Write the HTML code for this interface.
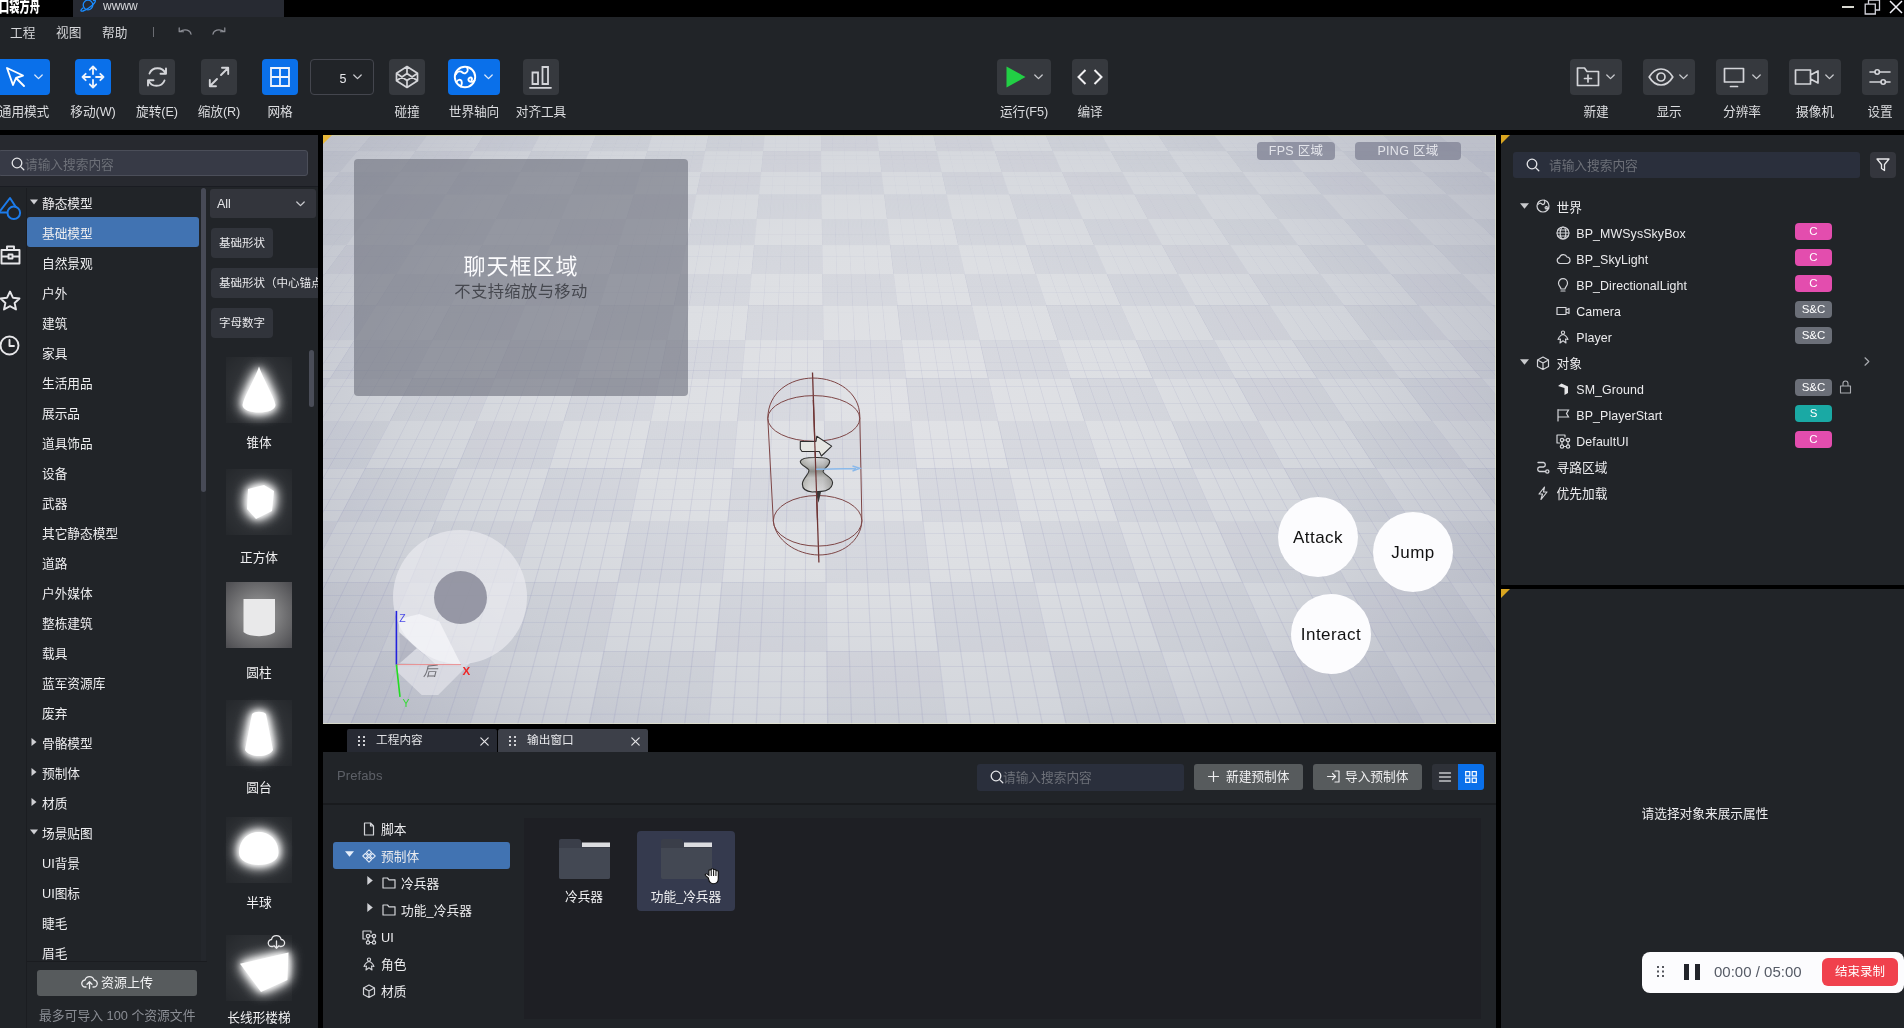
<!DOCTYPE html>
<html lang="zh-CN">
<head>
<meta charset="utf-8">
<title>wwww</title>
<style>
*{box-sizing:border-box;margin:0;padding:0}
html,body{width:1904px;height:1028px;overflow:hidden;background:#000}
body{position:relative;font-family:"Liberation Sans","Noto Sans CJK SC",sans-serif;font-size:13px;color:#e6e7ea;-webkit-font-smoothing:antialiased}
.abs{position:absolute}
.panel{position:absolute;background:#212428}
#wrap{position:absolute;left:0;top:0;width:1904px;height:1028px;overflow:hidden;will-change:transform}
svg{display:block;overflow:visible}
.ic{fill:none;stroke:#d4d5d9;stroke-width:1.6;stroke-linecap:round;stroke-linejoin:round}
/* title bar */
#titlebar{left:0;top:0;width:1904px;height:17px;background:#000}
#logo{left:-1px;top:-6.500px;font-weight:900;font-size:14px;letter-spacing:0;transform-origin:0 0;transform:scale(.73,1.12);color:#fff;line-height:22px;white-space:nowrap;font-family:"Liberation Sans","Noto Sans CJK SC",sans-serif}
#tab{left:73px;top:0;width:211px;height:17px;background:#272a32}
#tab span{position:absolute;left:30px;top:-2.500px;font-size:12px;color:#d8d9dc;line-height:17px}
/* toolbar */
#toolbar{left:0;top:17px;width:1904px;height:113px}
.menu{position:absolute;top:8px;font-size:12.700px;line-height:16px;color:#d6d7da}
.tb{position:absolute;top:42px;height:36px;border-radius:4px;background:#36393e}
.tb.on{background:#0a70ea}
.tl{position:absolute;top:87px;font-size:12.700px;letter-spacing:-.1px;line-height:16px;color:#dcdde0;white-space:nowrap;transform:translateX(-50%)}

.ti{position:absolute;left:42px;font-size:12.700px;line-height:18px;color:#eeeef0;white-space:nowrap}
.tag{position:absolute;left:1px;height:30px;padding:0 8px;background:#31343b;border-radius:4px;font-size:11.500px;line-height:30px;color:#e9e9ec;white-space:nowrap}

.badge2{position:absolute;top:7px;height:18px;border-radius:4px;background:rgba(130,132,150,.78);color:#e3e4ea;font-size:12.500px;line-height:18px;text-align:center;letter-spacing:.3px}
.act{position:absolute;width:80px;height:80px;border-radius:50%;background:#fcfcfe;color:#111;font-size:17px;line-height:82px;text-align:center;letter-spacing:.45px}

.rt{position:absolute;line-height:16px;color:#ececee;white-space:nowrap;letter-spacing:.1px}
.bdg{position:absolute;width:37px;height:17px;border-radius:4px;color:#fff;font-size:11.500px;line-height:16px;text-align:center;top:0}
</style>
</head>
<body>
<div id="wrap">
<!-- TITLE BAR -->
<div id="titlebar" class="abs">
  <div id="tab" class="abs"><span>wwww</span></div>
  <div id="logo" class="abs">口袋方舟</div>
  <svg class="abs" style="left:79px;top:-3px" width="18" height="16" viewBox="0 0 18 16"><g fill="none" stroke="#1a8cff" stroke-width="1.300"><circle cx="9" cy="8" r="4.800"/><path d="M4.300 10.800 C1 13.200 1.200 14.600 4 14 C7 13.200 12.500 9.500 15 6.500 C17 4 17 2.600 14 3.700"/></g></svg>
  <div class="abs" style="left:1842px;top:6px;width:12px;height:2px;background:#d8d8d0"></div>
  <svg class="abs" style="left:1864px;top:-1px" width="17" height="16" viewBox="0 0 17 16"><path fill="none" stroke="#d4d4dc" stroke-width="1.300" d="M1.200 5.200 H11.300 V15 H1.200 Z M4.500 5 V1 H15.500 V11 H11.500"/></svg>
  <svg class="abs" style="left:1889px;top:0" width="14" height="14" viewBox="0 0 14 14"><path fill="none" stroke="#f0f0f8" stroke-width="1.500" d="M1 1 L13 13 M13 1 L1 13"/></svg>
</div>
<!-- TOOLBAR -->
<div id="toolbar" class="panel">
  <div class="menu" style="left:10px">工程</div>
  <div class="menu" style="left:56px">视图</div>
  <div class="menu" style="left:102px">帮助</div>
  <div class="abs" style="left:153px;top:10px;width:1px;height:10px;background:#6a6c72"></div>
  <svg class="abs" style="left:177.500px;top:10px" width="14" height="8" viewBox="0 0 14 9" preserveAspectRatio="none"><path class="ic" style="stroke:#8a8c93;stroke-width:1.250" d="M13 8.200 C12.500 3.500 7 1.500 1.800 5 M1.200 1 V5.300 H5.500"/></svg>
  <svg class="abs" style="left:212px;top:10px" width="14" height="8" viewBox="0 0 14 9" preserveAspectRatio="none"><path class="ic" style="stroke:#8a8c93;stroke-width:1.250" d="M1 8.200 C1.500 3.500 7 1.500 12.200 5 M12.800 1 V5.300 H8.500"/></svg>

  <!-- 通用模式 -->
  <div class="tb on" style="left:-4px;width:54px"></div>
  <svg class="abs" style="left:5px;top:49px" width="22" height="22" viewBox="0 0 22 22"><path class="ic" style="stroke:#fff;stroke-width:1.9" d="M2 2 L8 19 L11 12 L18 9.5 Z M11.5 12.5 L19 20"/></svg>
  <svg class="abs" style="left:34px;top:57px" width="9" height="6" viewBox="0 0 9 6"><path class="ic" style="stroke:#dfe9f8;stroke-width:1.3" d="M0.8 1 L4.5 4.6 L8.2 1"/></svg>
  <div class="tl" style="left:24px">通用模式</div>
  <!-- 移动 -->
  <div class="tb on" style="left:75px;width:36px"></div>
  <svg class="abs" style="left:81px;top:48px" width="24" height="24" viewBox="0 0 24 24"><path class="ic" style="stroke:#eef3fb;stroke-width:1.8" d="M12 1.5 V9 M12 15 V22.5 M1.5 12 H9 M15 12 H22.5 M8.8 4.7 L12 1.5 L15.2 4.7 M8.8 19.3 L12 22.5 L15.2 19.3 M4.7 8.8 L1.5 12 L4.7 15.2 M19.3 8.8 L22.5 12 L19.3 15.2"/></svg>
  <div class="tl" style="left:93px">移动(W)</div>
  <!-- 旋转 -->
  <div class="tb" style="left:139px;width:36px"></div>
  <svg class="abs" style="left:145px;top:48px" width="24" height="24" viewBox="0 0 24 24"><path class="ic" style="stroke-width:1.9" d="M4.5 8.5 A8.5 8 0 0 1 20.5 8.5 M19.5 15.5 A8.5 8 0 0 1 3.5 15.5 M21 3.5 V8.8 H15.5 M3 20.5 V15.2 H8.5"/></svg>
  <div class="tl" style="left:157px">旋转(E)</div>
  <!-- 缩放 -->
  <div class="tb" style="left:201px;width:36px"></div>
  <svg class="abs" style="left:208px;top:49px" width="22" height="22" viewBox="0 0 22 22"><path class="ic" style="stroke-width:1.9" d="M13 9 L20 2 M14 1.8 H20.2 V8 M9 13 L2 20 M1.8 14 V20.2 H8"/></svg>
  <div class="tl" style="left:219px">缩放(R)</div>
  <!-- 网格 -->
  <div class="tb on" style="left:262px;width:36px"></div>
  <svg class="abs" style="left:270px;top:50px" width="20" height="20" viewBox="0 0 20 20"><path class="ic" style="stroke:#eef3fb;stroke-width:1.8;stroke-linejoin:miter" d="M1 1 H19 V19 H1 Z M10 1 V19 M1 10 H19"/></svg>
  <div class="tl" style="left:280px">网格</div>
  <!-- dropdown -->
  <div class="abs" style="left:310px;top:42px;width:64px;height:36px;border:1px solid #44464e;border-radius:4px"></div>
  <div class="abs" style="left:339.500px;top:53.500px;font-size:12.500px;line-height:16px;color:#e8e9ec">5</div>
  <svg class="abs" style="left:353px;top:57px" width="9" height="6" viewBox="0 0 9 6"><path class="ic" style="stroke:#c9cace;stroke-width:1.3" d="M0.8 1 L4.5 4.6 L8.2 1"/></svg>
  <!-- 碰撞 -->
  <div class="tb" style="left:389px;width:36px"></div>
  <svg class="abs" style="left:395px;top:48px" width="24" height="24" viewBox="0 0 24 24"><path class="ic" style="stroke-width:1.7" d="M12 1.5 L22.5 8.3 V15.7 L12 22.5 L1.5 15.7 V8.3 Z M12 1.5 V8.5 M12 15.5 V22.5 M1.5 8.3 L12 15.5 L22.5 8.3 M1.5 15.7 L12 8.5 L22.5 15.7"/></svg>
  <div class="tl" style="left:407px">碰撞</div>
  <!-- 世界轴向 -->
  <div class="tb on" style="left:448px;width:52px"></div>
  <svg class="abs" style="left:453px;top:48px" width="24" height="24" viewBox="0 0 24 24"><g class="ic" style="stroke:#fff;stroke-width:1.9"><circle cx="12" cy="12" r="10.2"/><path d="M3 9 C5 5.5 8 6 9.5 7.5 C11 9 13.5 8.5 14.5 6 C15 4.5 14.5 3 14 2.2 M3.5 17 C4.5 14.5 7.5 14 8.5 16 C9.5 18 8.5 20 8 21.5 M21.5 15.5 C20 16.5 17.5 17.5 16 16 C14.5 14.5 16 12.5 17.5 12.5 C19 12.5 19.5 14 18.5 15"/></g></svg>
  <svg class="abs" style="left:484px;top:57px" width="9" height="6" viewBox="0 0 9 6"><path class="ic" style="stroke:#dfe9f8;stroke-width:1.3" d="M0.8 1 L4.5 4.6 L8.2 1"/></svg>
  <div class="tl" style="left:474px">世界轴向</div>
  <!-- 对齐工具 -->
  <div class="tb" style="left:523px;width:36px"></div>
  <svg class="abs" style="left:529px;top:48px" width="24" height="24" viewBox="0 0 24 24"><path class="ic" style="stroke-width:1.8;stroke-linejoin:miter" d="M3.5 7.5 H9 V19 H3.5 Z M13.5 2 H19 V19 H13.5 Z M1 22.8 H22"/></svg>
  <div class="tl" style="left:541px">对齐工具</div>
  <!-- 运行 -->
  <div class="tb" style="left:997px;width:54px"></div>
  <svg class="abs" style="left:1006px;top:49px" width="20" height="22" viewBox="0 0 20 22"><path d="M0.5 0.5 L19.5 11 L0.5 21.5 Z" fill="#22cf45"/></svg>
  <svg class="abs" style="left:1034px;top:57px" width="9" height="6" viewBox="0 0 9 6"><path class="ic" style="stroke:#c9cace;stroke-width:1.3" d="M0.8 1 L4.5 4.6 L8.2 1"/></svg>
  <div class="tl" style="left:1024px">运行(F5)</div>
  <!-- 编译 -->
  <div class="tb" style="left:1072px;width:36px"></div>
  <svg class="abs" style="left:1077px;top:52px" width="26" height="16" viewBox="0 0 26 16"><path class="ic" style="stroke:#f0f0f2;stroke-width:2;stroke-linecap:butt;stroke-linejoin:miter" d="M8.5 1 L1.5 8 L8.5 15 M17.5 1 L24.5 8 L17.5 15"/></svg>
  <div class="tl" style="left:1090px">编译</div>
  <!-- 新建 -->
  <div class="tb" style="left:1570px;width:52px"></div>
  <svg class="abs" style="left:1576px;top:49px" width="24" height="22" viewBox="0 0 24 22"><path class="ic" style="stroke-width:1.7" d="M1.5 2 H8.5 L11 5.5 H22.5 V19.5 H1.5 Z M12 9 V16 M8.5 12.5 H15.5"/></svg>
  <svg class="abs" style="left:1606px;top:57px" width="9" height="6" viewBox="0 0 9 6"><path class="ic" style="stroke:#c9cace;stroke-width:1.3" d="M0.8 1 L4.5 4.6 L8.2 1"/></svg>
  <div class="tl" style="left:1596px">新建</div>
  <!-- 显示 -->
  <div class="tb" style="left:1643px;width:52px"></div>
  <svg class="abs" style="left:1648px;top:50px" width="26" height="20" viewBox="0 0 26 20"><g class="ic" style="stroke-width:1.7"><path d="M1.2 10 C5 3.5 9 2 13 2 C17 2 21 3.5 24.8 10 C21 16.500 17 18 13 18 C9 18 5 16.500 1.2 10 Z"/><circle cx="13" cy="10" r="4"/></g></svg>
  <svg class="abs" style="left:1679px;top:57px" width="9" height="6" viewBox="0 0 9 6"><path class="ic" style="stroke:#c9cace;stroke-width:1.3" d="M0.8 1 L4.5 4.6 L8.2 1"/></svg>
  <div class="tl" style="left:1669px">显示</div>
  <!-- 分辨率 -->
  <div class="tb" style="left:1716px;width:52px"></div>
  <svg class="abs" style="left:1723px;top:50px" width="22" height="21" viewBox="0 0 22 21"><path class="ic" style="stroke-width:1.7" d="M1.5 1.500 H20.5 V15 H1.5 Z M7.5 19.5 H14.5"/></svg>
  <svg class="abs" style="left:1752px;top:57px" width="9" height="6" viewBox="0 0 9 6"><path class="ic" style="stroke:#c9cace;stroke-width:1.3" d="M0.8 1 L4.5 4.6 L8.2 1"/></svg>
  <div class="tl" style="left:1742px">分辨率</div>
  <!-- 摄像机 -->
  <div class="tb" style="left:1789px;width:52px"></div>
  <svg class="abs" style="left:1794px;top:51px" width="26" height="18" viewBox="0 0 26 18"><path class="ic" style="stroke-width:1.7" d="M1.5 2 H16.5 V16 H1.5 Z M16.5 7 L24 3 V15 L16.5 11"/></svg>
  <svg class="abs" style="left:1825px;top:57px" width="9" height="6" viewBox="0 0 9 6"><path class="ic" style="stroke:#c9cace;stroke-width:1.3" d="M0.8 1 L4.5 4.6 L8.2 1"/></svg>
  <div class="tl" style="left:1815px">摄像机</div>
  <!-- 设置 -->
  <div class="tb" style="left:1862px;width:36px"></div>
  <svg class="abs" style="left:1869px;top:51px" width="22" height="18" viewBox="0 0 22 18"><g class="ic" style="stroke-width:1.6"><path d="M1 4 H6 M10.5 4 H21 M1 14 H12 M16.5 14 H21"/><circle cx="8.2" cy="4" r="2.200"/><circle cx="14.2" cy="14" r="2.200"/></g></svg>
  <div class="tl" style="left:1880px">设置</div>
</div>
<!-- LEFT PANEL -->
<div id="left" class="panel" style="left:0;top:135px;width:318px;height:893px;overflow:hidden">
<svg width="0" height="0" style="position:absolute"><defs>
<filter id="glow" x="-60%" y="-60%" width="220%" height="220%"><feGaussianBlur in="SourceGraphic" stdDeviation="7" result="b"/><feGaussianBlur in="SourceGraphic" stdDeviation="3" result="c"/><feMerge><feMergeNode in="b"/><feMergeNode in="b"/><feMergeNode in="c"/><feMergeNode in="SourceGraphic"/></feMerge></filter>
<linearGradient id="waistg" x1="0" y1="0" x2="0" y2="1"><stop offset="0" stop-color="#55564e" stop-opacity="0"/><stop offset=".22" stop-color="#55564e" stop-opacity=".25"/><stop offset=".4" stop-color="#55564e" stop-opacity=".6"/><stop offset=".58" stop-color="#55564e" stop-opacity=".2"/><stop offset="1" stop-color="#55564e" stop-opacity="0"/></linearGradient><linearGradient id="bodyg" x1="0" y1="0" x2="1" y2="0"><stop offset="0" stop-color="#b9b9b4"/><stop offset=".3" stop-color="#dcdcdc"/><stop offset=".7" stop-color="#d6d6d8"/><stop offset="1" stop-color="#a8a8a6"/></linearGradient><radialGradient id="halo" cx="50%" cy="50%" r="72%"><stop offset="0" stop-color="#fff" stop-opacity=".16"/><stop offset=".55" stop-color="#fff" stop-opacity=".06"/><stop offset="1" stop-color="#fff" stop-opacity=".015"/></radialGradient><radialGradient id="cylbg" cx="50%" cy="50%" r="70%"><stop offset="0" stop-color="#a4a4a4"/><stop offset="0.600" stop-color="#6e6e70"/><stop offset="1" stop-color="#4c4c50"/></radialGradient>
</defs></svg>
<div class="abs" style="left:0;top:0;width:318px;height:51px;background:#27292f"></div>
<div class="abs" style="left:-2px;top:15px;width:310px;height:26px;background:#373a46;border:1px solid #4b4e59;border-radius:3px"></div>
<div class="abs" style="left:0;top:51px;width:318px;height:1px;background:#1a1c22"></div>
<svg class="abs" style="left:11px;top:22px" width="14" height="14" viewBox="0 0 14 14"><g class="ic" style="stroke:#e4e5e8;stroke-width:1.300"><circle cx="6" cy="6" r="4.800"/><path d="M9.600 9.600 L12.800 12.800"/></g></svg>
<div class="abs" style="left:25px;top:20.500px;font-size:12.700px;line-height:18px;color:#6d7078">请输入搜索内容</div>
<!-- icon column -->
<svg class="abs" style="left:-2px;top:60px" width="24" height="26" viewBox="0 0 24 26"><g class="ic" style="stroke:#1c7bea;stroke-width:2"><path d="M1 17.500 L12 3 L17.500 11.500"/><path d="M1 17.500 H9"/><circle cx="15.800" cy="17.800" r="6.300"/></g></svg>
<svg class="abs" style="left:0;top:110px" width="21" height="20" viewBox="0 0 21 20"><path class="ic" style="stroke:#e6e6e9;stroke-width:1.900" d="M1.500 5 H19.500 V18.500 H1.500 Z M7 5 V1.500 H14 V5 M1.500 11.500 H8 M13 11.500 H19.500 M8.500 9.500 H12.500 V13.500 H8.500 Z"/></svg>
<svg class="abs" style="left:-1px;top:155px" width="22" height="21" viewBox="0 0 22 21"><path class="ic" style="stroke:#e6e6e9;stroke-width:1.900" d="M11 1.500 L13.900 7.700 L20.500 8.500 L15.600 13 L17 19.500 L11 16.200 L5 19.500 L6.400 13 L1.500 8.500 L8.100 7.700 Z"/></svg>
<svg class="abs" style="left:-1px;top:200px" width="21" height="21" viewBox="0 0 21 21"><g class="ic" style="stroke:#e6e6e9;stroke-width:1.900"><circle cx="10.500" cy="10.500" r="9"/><path d="M10.500 5 V11 H15"/></g></svg>
<div class="abs" style="left:26px;top:53px;width:1px;height:840px;background:#1b1d21"></div>
<!-- tree -->
<div class="abs" style="left:0;top:53px;width:208px;height:773px;overflow:hidden"><div class="abs" style="left:0;top:-53px;width:208px;height:900px">
<svg class="abs" style="left:30px;top:64px" width="8" height="6" viewBox="0 0 8 6"><path d="M0 0.500 H8 L4 5.500 Z" fill="#cfd0d4"/></svg>
<div class="ti" style="top:60px">静态模型</div>
<div class="abs" style="left:27px;top:82px;width:172px;height:30px;background:#4173b2;border-radius:3px"></div>
<div class="ti" style="top:90px">基础模型</div>
<div class="ti" style="top:120px">自然景观</div>
<div class="ti" style="top:150px">户外</div>
<div class="ti" style="top:180px">建筑</div>
<div class="ti" style="top:210px">家具</div>
<div class="ti" style="top:240px">生活用品</div>
<div class="ti" style="top:270px">展示品</div>
<div class="ti" style="top:300px">道具饰品</div>
<div class="ti" style="top:330px">设备</div>
<div class="ti" style="top:360px">武器</div>
<div class="ti" style="top:390px">其它静态模型</div>
<div class="ti" style="top:420px">道路</div>
<div class="ti" style="top:450px">户外媒体</div>
<div class="ti" style="top:480px">整栋建筑</div>
<div class="ti" style="top:510px">载具</div>
<div class="ti" style="top:540px">蓝军资源库</div>
<div class="ti" style="top:570px">废弃</div>
<svg class="abs" style="left:31px;top:603px" width="6" height="8" viewBox="0 0 6 8"><path d="M0.500 0 V8 L5.500 4 Z" fill="#cfd0d4"/></svg>
<div class="ti" style="top:600px">骨骼模型</div>
<svg class="abs" style="left:31px;top:633px" width="6" height="8" viewBox="0 0 6 8"><path d="M0.500 0 V8 L5.500 4 Z" fill="#cfd0d4"/></svg>
<div class="ti" style="top:630px">预制体</div>
<svg class="abs" style="left:31px;top:663px" width="6" height="8" viewBox="0 0 6 8"><path d="M0.500 0 V8 L5.500 4 Z" fill="#cfd0d4"/></svg>
<div class="ti" style="top:660px">材质</div>
<svg class="abs" style="left:30px;top:694px" width="8" height="6" viewBox="0 0 8 6"><path d="M0 0.500 H8 L4 5.500 Z" fill="#cfd0d4"/></svg>
<div class="ti" style="top:690px">场景贴图</div>
<div class="ti" style="top:720px">UI背景</div>
<div class="ti" style="top:750px">UI图标</div>
<div class="ti" style="top:780px">睫毛</div>
<div class="ti" style="top:810px">眉毛</div>

</div></div>
<!-- tree scrollbar -->
<div class="abs" style="left:201px;top:53px;width:5px;height:304px;background:#474a56;border-radius:3px"></div>
<div class="abs" style="left:201px;top:357px;width:5px;height:470px;background:#24272c;"></div>
<!-- upload -->
<div class="abs" style="left:27px;top:826px;width:180px;height:1px;background:#1a1c20"></div>
<div class="abs" style="left:37px;top:835px;width:160px;height:26px;background:#575b5d;border-radius:3px"></div>
<svg class="abs" style="left:81px;top:840px" width="17" height="15" viewBox="0 0 17 15"><path class="ic" style="stroke:#ececee;stroke-width:1.300" d="M5 12 H4.500 A3.500 3.500 0 0 1 4 5 A4.700 4.700 0 0 1 13 5 A3.500 3.500 0 0 1 12.500 12 H12 M8.500 13.500 V7 M6 9.300 L8.500 6.800 L11 9.300"/></svg>
<div class="abs" style="left:101px;top:839px;font-size:13px;line-height:18px;color:#f1f1f3">资源上传</div>
<div class="abs" style="left:39px;top:872px;font-size:12.800px;line-height:18px;color:#8a8d94;white-space:nowrap">最多可导入 100 个资源文件</div>
<!-- asset column -->
<div class="abs" style="left:210px;top:54px;width:106px;height:29px;background:#33353c;border-radius:3px"></div>
<div class="abs" style="left:217px;top:60px;font-size:12.500px;line-height:18px;color:#e4e5e8">All</div>
<svg class="abs" style="left:296px;top:66px" width="9" height="6" viewBox="0 0 9 6"><path class="ic" style="stroke:#c9cace;stroke-width:1.300" d="M0.800 1 L4.500 4.600 L8.200 1"/></svg>
<div class="abs" style="left:210px;top:93px;width:108px;height:260px;overflow:hidden">
 <div class="tag" style="top:0">基础形状</div>
 <div class="tag" style="top:40px">基础形状（中心锚点）</div>
 <div class="tag" style="top:80px">字母数字</div>
</div>
<div class="abs" style="left:309px;top:215px;width:5px;height:57px;background:#4a4d58;border-radius:3px"></div>
<svg class="abs" style="left:226px;top:222px" width="66" height="66" viewBox="0 0 66 66"><rect x="0" y="0" width="66" height="66" fill="url(#halo)"/><path d="M33 9.500 C29.500 21 18 39 16.500 48 C16.500 58 49.500 58 49.500 48 C48 39 36.500 21 33 9.500 Z" fill="#fff" filter="url(#glow)"/></svg>
<div class="abs" style="left:208px;width:102px;text-align:center;top:299px;font-size:12.7px;line-height:18px;color:#f0f0f2;white-space:nowrap">锥体</div>
<svg class="abs" style="left:226px;top:334px" width="66" height="66" viewBox="0 0 66 66"><rect x="0" y="0" width="66" height="66" fill="url(#halo)"/><path d="M22 20 L38 16 L48 22 L46 42 L30 50 L21 40 Z" fill="#fff" filter="url(#glow)"/></svg>
<div class="abs" style="left:208px;width:102px;text-align:center;top:414px;font-size:12.7px;line-height:18px;color:#f0f0f2;white-space:nowrap">正方体</div>
<svg class="abs" style="left:226px;top:447px" width="66" height="66" viewBox="0 0 66 66"><rect x="0" y="0" width="66" height="66" fill="url(#cylbg)"/><path d="M17.500 17 H49 V50 C43 55.500 23 55.500 17.500 50 Z" fill="#e9e9ea"/></svg>
<div class="abs" style="left:208px;width:102px;text-align:center;top:529px;font-size:12.7px;line-height:18px;color:#f0f0f2;white-space:nowrap">圆柱</div>
<svg class="abs" style="left:226px;top:565px" width="66" height="66" viewBox="0 0 66 66"><rect x="0" y="0" width="66" height="66" fill="url(#halo)"/><path d="M26 14 C29 11 37 11 40 14 L47 50 C42 58 24 58 19 50 Z" fill="#fff" filter="url(#glow)"/></svg>
<div class="abs" style="left:208px;width:102px;text-align:center;top:644px;font-size:12.7px;line-height:18px;color:#f0f0f2;white-space:nowrap">圆台</div>
<svg class="abs" style="left:226px;top:682px" width="66" height="66" viewBox="0 0 66 66"><rect x="0" y="0" width="66" height="66" fill="url(#halo)"/><path d="M13 36 C13 8 52.500 8 52.500 36 C52.500 52 13 52 13 36 Z" fill="#fff" filter="url(#glow)"/></svg>
<div class="abs" style="left:208px;width:102px;text-align:center;top:759px;font-size:12.7px;line-height:18px;color:#f0f0f2;white-space:nowrap">半球</div>
<svg class="abs" style="left:226px;top:800px" width="66" height="66" viewBox="0 0 66 66"><rect x="0" y="0" width="66" height="66" fill="url(#halo)"/><path d="M14 28.700 L62.500 17.600 L61.400 45 L35 57 Z" fill="#fff" filter="url(#glow)"/></svg>
<div class="abs" style="left:208px;width:102px;text-align:center;top:874px;font-size:12.7px;line-height:18px;color:#f0f0f2;white-space:nowrap">长线形楼梯</div>

<!-- cloud download on last -->
<svg class="abs" style="left:267px;top:799px" width="19" height="16" viewBox="0 0 19 16"><path class="ic" style="stroke:#e8e8ea;stroke-width:1.300" d="M6 12.500 H5 A3.500 3.500 0 0 1 4.500 5.500 A5 5 0 0 1 14.200 5.500 A3.500 3.500 0 0 1 14 12.500 H13 M9.500 7 V14 M7 11.700 L9.500 14.200 L12 11.700"/></svg>
</div>
<!-- VIEWPORT -->
<div id="viewport" class="abs" style="left:323px;top:135px;width:1173px;height:589px;background:#d6d8e0;overflow:hidden">
<div class="abs" style="left:0;top:0;width:1173px;height:589px;background:radial-gradient(ellipse 60% 80% at 48% 47%,#e1e2e6 0%,#dddfe3 35%,#d2d5db 68%,#bdc0ca 100%)"></div>
<div class="abs" id="floor" style="left:0;top:0;width:2500px;height:1600px;transform-origin:0 0;transform:matrix3d(1.040400,0.000000,0,0.00000000, -0.326196,0.348075,0,-0.00066300, 0,0,1,0, -289.1935,-40.3050,0,1.928200);
background-image:conic-gradient(rgba(110,115,150,.07) 25%,transparent 0 50%,rgba(110,115,150,.07) 0 75%,transparent 0);background-size:200px 200px"></div>
<div class="abs" id="floor2" style="left:0;top:0;width:2500px;height:1600px;transform-origin:0 0;transform:matrix3d(1.040400,0.000000,0,0.00000000, -0.326196,0.348075,0,-0.00066300, 0,0,1,0, -289.1935,-40.3050,0,1.928200);
background-image:linear-gradient(rgba(140,142,185,.2) 0 1.5px,transparent 1.5px),linear-gradient(90deg,rgba(140,142,185,.2) 0 1.5px,transparent 1.5px);background-size:20px 20px,20px 20px;
-webkit-mask-image:linear-gradient(to bottom,rgba(0,0,0,.15) 0,rgba(0,0,0,.25) 30%,rgba(0,0,0,.7) 60%,#000 85%);mask-image:linear-gradient(to bottom,rgba(0,0,0,.15) 0,rgba(0,0,0,.25) 30%,rgba(0,0,0,.7) 60%,#000 85%)"></div>
<div class="abs" style="left:0;top:0;width:1173px;height:1px;background:rgba(205,205,140,.55)"></div>
<svg class="abs" style="left:0;top:0" width="9" height="9" viewBox="0 0 9 9"><path d="M0 0 H9 L0 9 Z" fill="#e8b83a"/></svg>

<!-- joystick -->
<div class="abs" style="left:70px;top:395px;width:134px;height:134px;border-radius:50%;background:rgba(238,238,242,.62)"></div>
<div class="abs" style="left:111px;top:436px;width:53px;height:53px;border-radius:50%;background:rgba(134,136,150,.82)"></div>
<svg class="abs" style="left:0;top:0" width="1173" height="588" viewBox="323 135 1173 588">
 <!-- view cube gizmo -->
 <polygon points="397.700,664.600 461,664.600 471,662 438.200,695 421.700,695 397.700,672.200" fill="rgba(236,236,242,.55)"/>
 <polygon points="399.600,663.300 416.700,648.200 435.600,664.600" fill="rgba(236,236,242,.5)"/>
 <polygon points="399,619 419.200,614 439.400,621.600 461,664.600 435.600,664.600 399,631.700" fill="rgba(250,250,253,.62)"/>
 <polygon points="399.600,633 416.700,648.200 399.600,663.300" fill="rgba(170,172,186,.55)"/>
 <text x="423" y="676" font-size="14" fill="#707076" font-style="italic" font-family="'Liberation Sans','Noto Sans CJK SC',sans-serif">后</text>
 <line x1="396.400" y1="664.600" x2="461" y2="664.600" stroke="rgba(238,130,130,.85)" stroke-width="1"/>
 <line x1="396.400" y1="610.900" x2="396.400" y2="664.600" stroke="#2222dd" stroke-width="1.600"/>
 <line x1="396.400" y1="664.600" x2="400" y2="696.900" stroke="#22dd22" stroke-width="1.600"/>
 <text x="399.300" y="621.500" font-size="10.500" fill="#4c4ce6" font-family="'Liberation Sans',sans-serif">Z</text>
 <text x="462.500" y="674.700" font-size="11.500" font-weight="bold" fill="#ee2626" font-family="'Liberation Sans',sans-serif">X</text>
 <text x="402.500" y="707" font-size="10.500" fill="#33dd33" font-family="'Liberation Sans',sans-serif">Y</text>
 <!-- capsule -->
 <g fill="none" stroke="#7d4545" stroke-width="1">
  <line x1="812.500" y1="372.400" x2="818.900" y2="562.600" stroke="#6e3434" stroke-width="1.300"/>
  <ellipse cx="813.800" cy="418.400" rx="46" ry="22.800"/>
  <path d="M767.800 418.400 C768 392 790 378.500 812.600 378 C838 378 859.500 393 859.800 416"/>
  <ellipse cx="817.600" cy="520.800" rx="44.300" ry="25.300"/>
  <path d="M773.300 520.800 C775 540 796 554.500 818.600 555 C842 555 861 541 861.900 520.800"/>
  <line x1="767.800" y1="418.400" x2="773.300" y2="520.800"/>
  <line x1="859.800" y1="416" x2="861.900" y2="520.800"/>
 </g>
 <!-- character -->
 <path d="M800.300 441.500 H816 L816.800 436.200 L831.700 446.100 L821.400 456 L819.300 451.500 H802 L800.300 449 Z" fill="#e6e6e2" stroke="#2e2e2e" stroke-width="1.100" stroke-linejoin="round"/>
 <path d="M800.300 461.400 C801 458.500 806 457.500 815 457.500 C824 457.300 829.500 458 829.700 461.400 C829.500 466.500 823.500 468 823 471.300 C823.500 475 832.500 477 832.600 482.500 C832.500 488 827 491.200 821.400 491.400 L812.300 492 C806 491.500 802.200 488.500 802.400 483.700 C802.800 478 808.800 475 809 470.500 C808.500 467 800.500 466 800.300 461.400 Z" fill="url(#bodyg)" stroke="#2e2e2e" stroke-width="1.100"/>
 <path d="M800.300 461.400 C801 458.500 806 457.500 815 457.500 C824 457.300 829.500 458 829.700 461.400 C829.500 466.500 823.500 468 823 471.300 C823.500 475 832.500 477 832.600 482.500 C832.500 488 827 491.200 821.400 491.400 L812.300 492 C806 491.500 802.200 488.500 802.400 483.700 C802.800 478 808.800 475 809 470.500 C808.500 467 800.500 466 800.300 461.400 Z" fill="url(#waistg)"/>
 <path d="M815.600 492 H821 L818.500 502.800 Z" fill="#3a3a3a"/>
 <line x1="813.300" y1="400" x2="817.500" y2="520" stroke="#6e3434" stroke-width="1.200"/>
 <path d="M816.300 469.300 L856 468.500 M852.500 466 L859.900 468.400 L852.500 471" fill="none" stroke="#8ab9ea" stroke-width="1.400"/>
</svg>
<div class="abs" style="left:1172px;top:0;width:1px;height:589px;background:rgba(235,235,200,.55)"></div><div class="abs" style="left:0;top:588px;width:1173px;height:1px;background:rgba(235,235,200,.55)"></div>
<!-- chat box -->
<div class="abs" style="left:31px;top:24px;width:334px;height:237px;border-radius:4px;background:rgba(116,118,130,.66)"></div>
<div class="abs" style="left:31px;top:119px;width:334px;text-align:center;font-size:22px;line-height:26px;color:#fbfbfd;letter-spacing:1px">聊天框区域</div>
<div class="abs" style="left:31px;top:145px;width:334px;text-align:center;font-size:16.300px;line-height:22px;color:#46484f;letter-spacing:.4px">不支持缩放与移动</div>
<!-- FPS / PING -->
<div class="badge2" style="left:934px;width:78px">FPS 区域</div>
<div class="badge2" style="left:1032px;width:106px">PING 区域</div>
<!-- action buttons -->
<div class="act" style="left:955px;top:362px">Attack</div>
<div class="act" style="left:1050px;top:377px">Jump</div>
<div class="act" style="left:968px;top:459px">Interact</div>
</div>
<!-- BOTTOM PANEL -->

<!-- BOTTOM TABS -->
<div class="abs" style="left:347px;top:729px;width:150px;height:23px;background:#272a33;border-radius:2px 2px 0 0"></div>
<div class="abs" style="left:498px;top:729px;width:150px;height:23px;background:#3d4049;border-radius:2px 2px 0 0"></div>
<svg class="abs" style="left:358px;top:736px" width="7" height="10" viewBox="0 0 7 10"><g fill="#d0d1d5"><rect x="0" y="0" width="2" height="2"/><rect x="5" y="0" width="2" height="2"/><rect x="0" y="4" width="2" height="2"/><rect x="5" y="4" width="2" height="2"/><rect x="0" y="8" width="2" height="2"/><rect x="5" y="8" width="2" height="2"/></g></svg>
<div class="abs" style="left:376px;top:732px;font-size:11.700px;line-height:16px;color:#e0e1e4">工程内容</div>
<svg class="abs" style="left:480px;top:737px" width="9" height="9" viewBox="0 0 9 9"><path class="ic" style="stroke:#e4e4e7;stroke-width:1.200" d="M0.800 0.800 L8.200 8.200 M8.200 0.800 L0.800 8.200"/></svg>
<svg class="abs" style="left:509px;top:736px" width="7" height="10" viewBox="0 0 7 10"><g fill="#d0d1d5"><rect x="0" y="0" width="2" height="2"/><rect x="5" y="0" width="2" height="2"/><rect x="0" y="4" width="2" height="2"/><rect x="5" y="4" width="2" height="2"/><rect x="0" y="8" width="2" height="2"/><rect x="5" y="8" width="2" height="2"/></g></svg>
<div class="abs" style="left:527px;top:732px;font-size:11.700px;line-height:16px;color:#e8e9ec">输出窗口</div>
<svg class="abs" style="left:630.500px;top:737px" width="9" height="9" viewBox="0 0 9 9"><path class="ic" style="stroke:#e4e4e7;stroke-width:1.200" d="M0.800 0.800 L8.200 8.200 M8.200 0.800 L0.800 8.200"/></svg>
<div id="bottom" class="panel" style="left:323px;top:752px;width:1173px;height:276px;overflow:hidden">
<div class="abs" style="left:14px;top:15px;font-size:13px;line-height:18px;color:#5d6067;letter-spacing:.1px">Prefabs</div>
<!-- search -->
<div class="abs" style="left:654px;top:12px;width:207px;height:27px;background:#2a2f3c;border-radius:3px"></div>
<svg class="abs" style="left:667px;top:18px" width="14" height="14" viewBox="0 0 14 14"><g class="ic" style="stroke:#e4e5e8;stroke-width:1.300"><circle cx="6" cy="6" r="4.800"/><path d="M9.600 9.600 L12.800 12.800"/></g></svg>
<div class="abs" style="left:680px;top:17px;font-size:12.700px;line-height:18px;color:#6d7078">请输入搜索内容</div>
<!-- buttons -->
<div class="abs" style="left:871px;top:12px;width:109px;height:26px;background:#575b5d;border-radius:3px"></div>
<svg class="abs" style="left:885px;top:19px" width="11" height="11" viewBox="0 0 11 11"><path class="ic" style="stroke:#ececee;stroke-width:1.200" d="M5.500 0.500 V10.500 M0.500 5.500 H10.500"/></svg>
<div class="abs" style="left:903px;top:16px;font-size:12.700px;line-height:18px;color:#f1f1f3">新建预制体</div>
<div class="abs" style="left:990px;top:12px;width:109px;height:26px;background:#575b5d;border-radius:3px"></div>
<svg class="abs" style="left:1004px;top:18px" width="13" height="13" viewBox="0 0 13 13"><path class="ic" style="stroke:#ececee;stroke-width:1.200" d="M0.500 6.500 H8 M5.500 3.500 L8.500 6.500 L5.500 9.500 M8 1 H12 V12 H8"/></svg>
<div class="abs" style="left:1022px;top:16px;font-size:12.700px;line-height:18px;color:#f1f1f3">导入预制体</div>
<div class="abs" style="left:1109px;top:12px;width:26px;height:26px;background:#2e3138;border-radius:3px 0 0 3px"></div>
<svg class="abs" style="left:1116px;top:20px" width="12" height="10" viewBox="0 0 12 10"><path class="ic" style="stroke:#c4c5c9;stroke-width:1.300" d="M0.500 1 H11.500 M0.500 5 H11.500 M0.500 9 H11.500"/></svg>
<div class="abs" style="left:1135px;top:12px;width:26px;height:26px;background:#0a70ea;border-radius:0 3px 3px 0"></div>
<svg class="abs" style="left:1142px;top:19px" width="12" height="12" viewBox="0 0 12 12"><path class="ic" style="stroke:#fff;stroke-width:1.200;stroke-linejoin:miter" d="M0.700 0.700 H4.800 V4.800 H0.700 Z M7.200 0.700 H11.300 V4.800 H7.200 Z M0.700 7.200 H4.800 V11.300 H0.700 Z M7.200 7.200 H11.300 V11.300 H7.200 Z"/></svg>
<!-- divider -->
<div class="abs" style="left:0;top:51px;width:1173px;height:2px;background:#191b1e"></div>
<!-- content -->
<div class="abs" style="left:201px;top:66px;width:957px;height:201px;background:#1e1f24"></div>
<div class="abs" style="left:314px;top:79px;width:98px;height:80px;background:#353a4e;border-radius:4px"></div>
<svg class="abs" style="left:236px;top:86.5px" width="51" height="40" viewBox="0 0 51 40">
<path d="M2 0 H19 C21 0 22 1 22.500 3 L23 5 H51 V38 C51 39.200 50.200 40 49 40 H2 C0.800 40 0 39.200 0 38 V2 C0 0.800 0.800 0 2 0 Z" fill="#3a3e49"/>
<rect x="23" y="3.500" width="28" height="4.500" fill="#dcdde0"/>
<path d="M0 9 H51 V38 C51 39.200 50.200 40 49 40 H2 C0.800 40 0 39.200 0 38 Z" fill="#434853"/>
</svg>
<svg class="abs" style="left:338px;top:86.5px" width="51" height="40" viewBox="0 0 51 40">
<path d="M2 0 H19 C21 0 22 1 22.500 3 L23 5 H51 V38 C51 39.200 50.200 40 49 40 H2 C0.800 40 0 39.200 0 38 V2 C0 0.800 0.800 0 2 0 Z" fill="#3a3e49"/>
<rect x="23" y="3.500" width="28" height="4.500" fill="#dcdde0"/>
<path d="M0 9 H51 V38 C51 39.200 50.200 40 49 40 H2 C0.800 40 0 39.200 0 38 Z" fill="#434853"/>
</svg>
<div class="abs" style="left:211px;top:136px;width:100px;text-align:center;font-size:12.700px;line-height:18px;color:#f0f0f2">冷兵器</div>
<div class="abs" style="left:313px;top:136px;width:100px;text-align:center;font-size:12.700px;line-height:18px;color:#f0f0f2;white-space:nowrap">功能_冷兵器</div>
<!-- hand cursor -->
<svg class="abs" style="left:380px;top:116px" width="20" height="18" viewBox="0 0 17 20" preserveAspectRatio="none"><path d="M4.500 11 L2.200 8.300 C1.300 7.300 2.600 6 3.700 6.900 L5 8.200 V3 C5 1.600 7 1.600 7 3 V1.800 C7 0.400 9 0.400 9 1.800 V2.600 C9 1.300 11 1.300 11 2.600 V4 C11 2.800 13 2.800 13 4 V12 C13 15 11.500 17.500 8.500 17.500 C6 17.500 5 15 4.500 11 Z" fill="#fff" stroke="#111" stroke-width="1"/><path d="M7 3 V9 M9 2.600 V9 M11 4 V9" stroke="#111" stroke-width=".9" fill="none"/></svg>
<!-- tree -->
<div class="abs" style="left:10px;top:90px;width:177px;height:27px;background:#4173b2;border-radius:3px"></div>
<svg class="abs" style="left:39px;top:69.5px" width="14" height="14" viewBox="0 0 14 14"><path class="ic" style="stroke-width:1.200" d="M2.500 1 H8.500 L11.500 4 V13 H2.500 Z M8.500 1 V4 H11.500"/></svg>
<div class="rt" style="left:58px;top:70px;font-size:12.700px">脚本</div>
<svg class="abs" style="left:22px;top:99px" width="9" height="6" viewBox="0 0 9 6"><path d="M0 0.300 H9 L4.500 5.800 Z" fill="#e6eefa"/></svg>
<svg class="abs" style="left:39px;top:96.5px" width="14" height="14" viewBox="0 0 14 14"><g class="ic" style="stroke:#dfe8f5;stroke-width:1.100"><path d="M7 0.800 L9.600 3.400 L7 6 L4.400 3.400 Z M7 8 L9.600 10.600 L7 13.200 L4.400 10.600 Z M3.400 4.400 L6 7 L3.400 9.600 L0.800 7 Z M10.600 4.400 L13.200 7 L10.600 9.600 L8 7 Z"/></g></svg>
<div class="rt" style="left:58px;top:97px;font-size:12.700px">预制体</div>
<svg class="abs" style="left:44px;top:124px" width="6" height="9" viewBox="0 0 6 9"><path d="M0.300 0 V9 L5.800 4.500 Z" fill="#d0d1d5"/></svg>
<svg class="abs" style="left:59px;top:123.5px" width="14" height="14" viewBox="0 0 14 14"><path class="ic" style="stroke-width:1.200" d="M1 2 H5.500 L7 3.800 H13 V12 H1 Z"/></svg>
<div class="rt" style="left:78px;top:124px;font-size:12.700px">冷兵器</div>
<svg class="abs" style="left:44px;top:151px" width="6" height="9" viewBox="0 0 6 9"><path d="M0.300 0 V9 L5.800 4.500 Z" fill="#d0d1d5"/></svg>
<svg class="abs" style="left:59px;top:150.5px" width="14" height="14" viewBox="0 0 14 14"><path class="ic" style="stroke-width:1.200" d="M1 2 H5.500 L7 3.800 H13 V12 H1 Z"/></svg>
<div class="rt" style="left:78px;top:151px;font-size:12.700px">功能_冷兵器</div>
<svg class="abs" style="left:39px;top:177.5px" width="14" height="14" viewBox="0 0 14 14"><g class="ic" style="stroke-width:1.200"><path d="M8.500 1 H1 V9 H3.500 M9 1 V3"/><circle cx="6" cy="6" r="1.700"/><circle cx="12" cy="6" r="1.700"/><circle cx="6" cy="12.500" r="1.700"/><circle cx="12" cy="12.500" r="1.700"/><path d="M7.700 6 H10.300 M7.700 12.500 H10.300 M6 7.700 V10.800 M12 7.700 V10.800"/></g></svg>
<div class="rt" style="left:58px;top:178px;font-size:12.700px">UI</div>
<svg class="abs" style="left:39px;top:204.5px" width="14" height="14" viewBox="0 0 14 14"><g class="ic" style="stroke-width:1.100"><circle cx="7" cy="2.600" r="1.600"/><path d="M7 4.500 C4.500 5 3 7 2 9.500 L4.500 9 L4 13 L7 10.800 L10 13 L9.500 9 L12 9.500 C11 7 9.500 5 7 4.500 Z"/></g></svg>
<div class="rt" style="left:58px;top:205px;font-size:12.700px">角色</div>
<svg class="abs" style="left:39px;top:231.5px" width="14" height="14" viewBox="0 0 14 14"><g class="ic" style="stroke-width:1.200"><path d="M7 1 L12.500 4 V10.500 L7 13.500 L1.500 10.500 V4 Z M1.500 4 L7 7 L12.500 4 M7 7 V13.500"/></g></svg>
<div class="rt" style="left:58px;top:232px;font-size:12.700px">材质</div>

</div>
<!-- RIGHT PANELS -->
<div id="right1" class="panel" style="left:1501px;top:135px;width:403px;height:450px">
<svg class="abs" style="left:0;top:0" width="9" height="9" viewBox="0 0 9 9"><path d="M0 0 H9 L0 9 Z" fill="#d9a520"/></svg>
<div class="abs" style="left:12px;top:17px;width:347px;height:26px;background:#2a2f3c;border-radius:3px"></div>
<svg class="abs" style="left:25px;top:23px" width="14" height="14" viewBox="0 0 14 14"><g class="ic" style="stroke:#e4e5e8;stroke-width:1.300"><circle cx="6" cy="6" r="4.800"/><path d="M9.600 9.600 L12.800 12.800"/></g></svg>
<div class="abs" style="left:48px;top:22px;font-size:12.700px;line-height:18px;color:#6d7078">请输入搜索内容</div>
<div class="abs" style="left:369px;top:17px;width:26px;height:26px;background:#34363d;border-radius:4px"></div>
<svg class="abs" style="left:375px;top:23px" width="14" height="14" viewBox="0 0 14 14"><path class="ic" style="stroke:#e8e8ea;stroke-width:1.300" d="M1 1 H13 L8.500 6.500 V12.500 L5.500 10.500 V6.500 Z"/></svg>
<svg class="abs" style="left:18.5px;top:67.7px" width="9" height="6" viewBox="0 0 9 6"><path d="M0 0.300 H9 L4.500 5.800 Z" fill="#c9cacd"/></svg>
<svg class="abs" style="left:35px;top:64.2px" width="14" height="14" viewBox="0 0 14 14"><g class="ic" style="stroke-width:1.2"><circle cx="7" cy="7" r="6"/><path d="M2 5.500 C3.500 3.500 5 4 5.800 5 C6.800 6 8.200 5.500 8.600 4 C9 3 8.700 1.800 8.400 1.200 M12.800 9 C11.500 10 10 10.200 9.300 9.300 C8.700 8.300 9.800 7.300 10.700 7.600 C11.500 8 11.300 9 10.800 9.200"/></g></svg>
<div class="rt" style="left:55.5px;top:64.7px;font-size:12.700px">世界</div>
<svg class="abs" style="left:55px;top:90.5px" width="14" height="14" viewBox="0 0 14 14"><g class="ic" style="stroke-width:1.100"><circle cx="7" cy="7" r="6"/><ellipse cx="7" cy="7" rx="2.800" ry="6"/><path d="M1 7 H13 M1.800 4 H12.200 M1.800 10 H12.200"/></g></svg>
<div class="rt" style="left:75.3px;top:91px;font-size:12.400px">BP_MWSysSkyBox</div>
<div class="bdg" style="left:294px;top:88px;background:#e34dae">C</div>
<svg class="abs" style="left:55px;top:116.5px" width="14" height="14" viewBox="0 0 14 14"><g class="ic" style="stroke-width:1.200"><path d="M4 11.500 A3 3 0 0 1 3.500 5.600 A4 4 0 0 1 11 5 A3.300 3.300 0 0 1 11.500 11.500 Z"/></g></svg>
<div class="rt" style="left:75.3px;top:117px;font-size:12.400px">BP_SkyLight</div>
<div class="bdg" style="left:294px;top:114px;background:#e34dae">C</div>
<svg class="abs" style="left:55px;top:142.5px" width="14" height="14" viewBox="0 0 14 14"><g class="ic" style="stroke-width:1.200"><path d="M5 11 C5 9 2.500 8 2.500 5.200 A4.500 4.500 0 0 1 11.500 5.200 C11.500 8 9 9 9 11 Z M5 13 H9"/></g></svg>
<div class="rt" style="left:75.3px;top:143px;font-size:12.400px">BP_DirectionalLight</div>
<div class="bdg" style="left:294px;top:140px;background:#e34dae">C</div>
<svg class="abs" style="left:55px;top:168.5px" width="14" height="14" viewBox="0 0 14 14"><g class="ic" style="stroke-width:1.200"><path d="M1 3.500 H10 V10.500 H1 Z M10 6 L13 4.500 V9.500 L10 8"/></g></svg>
<div class="rt" style="left:75.3px;top:169px;font-size:12.400px">Camera</div>
<div class="bdg" style="left:294px;top:166px;background:#6b6f78">S&C</div>
<svg class="abs" style="left:55px;top:194.5px" width="14" height="14" viewBox="0 0 14 14"><g class="ic" style="stroke-width:1.100"><circle cx="7" cy="2.600" r="1.600"/><path d="M7 4.500 C4.500 5 3 7 2 9.500 L4.500 9 L4 13 L7 10.800 L10 13 L9.500 9 L12 9.500 C11 7 9.500 5 7 4.500 Z"/></g></svg>
<div class="rt" style="left:75.3px;top:195px;font-size:12.400px">Player</div>
<div class="bdg" style="left:294px;top:192px;background:#6b6f78">S&C</div>
<svg class="abs" style="left:18.5px;top:224px" width="9" height="6" viewBox="0 0 9 6"><path d="M0 0.300 H9 L4.500 5.800 Z" fill="#c9cacd"/></svg>
<svg class="abs" style="left:35px;top:220.5px" width="14" height="14" viewBox="0 0 14 14"><g class="ic" style="stroke-width:1.200"><path d="M7 1 L12.500 4 V10.500 L7 13.500 L1.500 10.500 V4 Z M1.500 4 L7 7 L12.500 4 M7 7 V13.500"/></g></svg>
<div class="rt" style="left:55.5px;top:221px;font-size:12.700px">对象</div>
<svg class="abs" style="left:55px;top:246.5px" width="14" height="14" viewBox="0 0 14 14"><path d="M5.500 1.500 L12 4.500 V11 L8.500 13 V6 L2 4 Z" fill="#e6e6e8"/></svg>
<div class="rt" style="left:75.3px;top:247px;font-size:12.400px">SM_Ground</div>
<div class="bdg" style="left:294px;top:244px;background:#6b6f78">S&C</div>
<svg class="abs" style="left:55px;top:272.5px" width="14" height="14" viewBox="0 0 14 14"><g class="ic" style="stroke-width:1.200;stroke-linejoin:miter"><path d="M2 1.500 V13 M2 2 H12.500 L10.500 5.500 L12.500 9 H2"/></g></svg>
<div class="rt" style="left:75.3px;top:273px;font-size:12.400px">BP_PlayerStart</div>
<div class="bdg" style="left:294px;top:270px;background:#1aa9a4">S</div>
<svg class="abs" style="left:55px;top:298.5px" width="14" height="14" viewBox="0 0 14 14"><g class="ic" style="stroke-width:1.200"><path d="M8.500 1 H1 V9 H3.500 M9 1 V3"/><circle cx="6" cy="6" r="1.700"/><circle cx="12" cy="6" r="1.700"/><circle cx="6" cy="12.500" r="1.700"/><circle cx="12" cy="12.500" r="1.700"/><path d="M7.700 6 H10.300 M7.700 12.500 H10.300 M6 7.700 V10.800 M12 7.700 V10.800"/></g></svg>
<div class="rt" style="left:75.3px;top:299px;font-size:12.400px">DefaultUI</div>
<div class="bdg" style="left:294px;top:296px;background:#e34dae">C</div>
<svg class="abs" style="left:35px;top:324.5px" width="14" height="14" viewBox="0 0 14 14"><g class="ic" style="stroke-width:1.300"><path d="M2 2.500 H7.500 A2.300 2.300 0 0 1 7.500 7 H3.500 A2.300 2.300 0 0 0 3.500 11.500 H9.500"/><circle cx="11.300" cy="11.500" r="1.600"/></g></svg>
<div class="rt" style="left:55.5px;top:325px;font-size:12.700px">寻路区域</div>
<svg class="abs" style="left:35px;top:350.5px" width="14" height="14" viewBox="0 0 14 14"><g class="ic" style="stroke-width:1.200"><path d="M8.500 1 L3 8 H6.500 L5 13.500 L11 6 H7.500 Z"/></g></svg>
<div class="rt" style="left:55.5px;top:351px;font-size:12.700px">优先加载</div>
<svg class="abs" style="left:363px;top:221.5px" width="6" height="9" viewBox="0 0 6 9"><path class="ic" style="stroke:#a9abb0;stroke-width:1.200" d="M1 0.800 L4.800 4.500 L1 8.200"/></svg>
<svg class="abs" style="left:338px;top:245px" width="13" height="14" viewBox="0 0 13 14"><path class="ic" style="stroke:#a9abb0;stroke-width:1.100" d="M1.500 6 H11.500 V13 H1.500 Z M4 6 V3.500 A2.500 2.500 0 0 1 9 3.500 V6"/></svg>

</div>
<div id="right2" class="panel" style="left:1501px;top:589px;width:403px;height:439px">
<svg class="abs" style="left:0;top:0" width="9" height="9" viewBox="0 0 9 9"><path d="M0 0 H9 L0 9 Z" fill="#d9a520"/></svg>
<div class="abs" style="left:0;top:216px;width:408px;text-align:center;font-size:12.700px;line-height:18px;color:#ececee">请选择对象来展示属性</div>
</div>

<!-- RECORDER -->
<div class="abs" style="left:1642px;top:952px;width:262px;height:41px;background:#fcfcfe;border-radius:8px"></div>
<svg class="abs" style="left:1657px;top:966px" width="8" height="12" viewBox="0 0 8 12"><g fill="#55575e"><rect x="0" y="0" width="2" height="2"/><rect x="5" y="0" width="2" height="2"/><rect x="0" y="4.500" width="2" height="2"/><rect x="5" y="4.500" width="2" height="2"/><rect x="0" y="9" width="2" height="2"/><rect x="5" y="9" width="2" height="2"/></g></svg>
<div class="abs" style="left:1684px;top:964px;width:5px;height:16px;background:#22242a"></div>
<div class="abs" style="left:1695px;top:964px;width:5px;height:16px;background:#22242a"></div>
<div class="abs" style="left:1714px;top:963px;font-size:15px;line-height:18px;color:#565b66;white-space:nowrap">00:00 / 05:00</div>
<div class="abs" style="left:1822px;top:958px;width:76px;height:28px;background:#f0414d;border-radius:6px;color:#fff;font-size:12.500px;line-height:28px;text-align:center">结束录制</div>
</div>
</body>
</html>
